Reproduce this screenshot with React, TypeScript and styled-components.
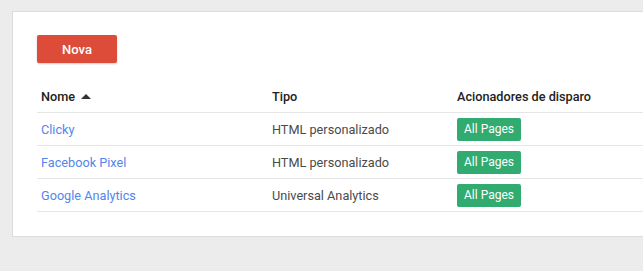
import styled, { createGlobalStyle } from "styled-components";

const GlobalStyle = createGlobalStyle`
  body {
    margin: 0;
    background-color: #ececec;
    font-family: Roboto, "Liberation Sans", sans-serif;
  }
`;

interface Tag {
  name: string;
  type: string;
  trigger: string;
}

const tags: Tag[] = [
  { name: "Clicky", type: "HTML personalizado", trigger: "All Pages" },
  { name: "Facebook Pixel", type: "HTML personalizado", trigger: "All Pages" },
  { name: "Google Analytics", type: "Universal Analytics", trigger: "All Pages" },
];

const Page = styled.div`
  padding: 11px 0 34px 12px;
`;

const Card = styled.div`
  background-color: #ffffff;
  border: 1px solid #dcdcdc;
  border-right-color: #e4e4e4;
  width: 629px;
  padding: 23px 0 24px 24px;
`;

const NewButton = styled.button`
  display: block;
  width: 80px;
  height: 28px;
  border: none;
  border-radius: 2px;
  background-color: #dd4b39;
  color: #ffffff;
  font-family: Roboto, "Liberation Sans", sans-serif;
  font-size: 13px;
  font-weight: 500;
  box-shadow: 0 1px 2px rgba(0, 0, 0, 0.2);
  cursor: pointer;
  margin-bottom: 17px;
`;

const Table = styled.div`
  display: grid;
  grid-template-columns: 231px 185px 1fr;
`;

const Cell = styled.div<{ $head?: boolean }>`
  height: 32px;
  display: flex;
  align-items: center;
  padding-left: 4px;
  border-bottom: 1px solid #e6e6e6;
  font-size: 12.7px;
  color: ${(p) => (p.$head ? "#222222" : "#4a4a4a")};
  font-weight: ${(p) => (p.$head ? 500 : 400)};
`;

const SortArrow = styled.span`
  display: inline-block;
  width: 0;
  height: 0;
  margin-left: 6px;
  border-left: 5px solid transparent;
  border-right: 5px solid transparent;
  border-bottom: 5px solid #333333;
`;

const NameLink = styled.a`
  color: #5286ee;
  text-decoration: none;
  cursor: pointer;
`;

const Badge = styled.span`
  display: inline-flex;
  align-items: center;
  justify-content: center;
  width: 64px;
  height: 23px;
  border-radius: 2px;
  background-color: #31ab70;
  color: #ffffff;
  font-size: 12px;
`;

export default function App() {
  return (
    <>
      <GlobalStyle />
      <Page>
        <Card>
          <NewButton>Nova</NewButton>
          <Table>
            <Cell $head>
              Nome
              <SortArrow />
            </Cell>
            <Cell $head>Tipo</Cell>
            <Cell $head>Acionadores de disparo</Cell>
            {tags.map((tag) => (
              <>
                <Cell key={tag.name + "-n"}>
                  <NameLink>{tag.name}</NameLink>
                </Cell>
                <Cell key={tag.name + "-t"}>{tag.type}</Cell>
                <Cell key={tag.name + "-g"}>
                  <Badge>{tag.trigger}</Badge>
                </Cell>
              </>
            ))}
          </Table>
        </Card>
      </Page>
    </>
  );
}
